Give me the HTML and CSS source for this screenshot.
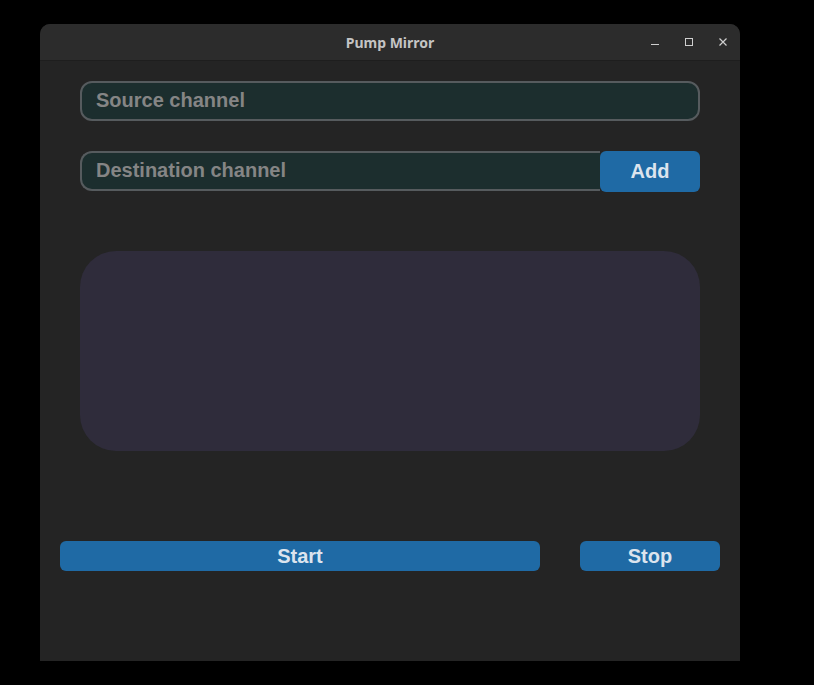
FILE: index.html
```html
<!DOCTYPE html>
<html>
<head>
<meta charset="utf-8">
<link rel="stylesheet" href="styles.css">
</head>
<body>
<div class="window">
  <div class="titlebar">
    <span class="title">Pump Mirror</span>
    <div class="controls">
      <svg class="ctl" width="10" height="10" viewBox="0 0 10 10"><path d="M1 7.5h8" stroke="#cfcfcf" stroke-width="1"/></svg>
      <svg class="ctl" width="10" height="10" viewBox="0 0 10 10"><rect x="1.5" y="1.5" width="7" height="7" fill="none" stroke="#cfcfcf" stroke-width="1"/></svg>
      <svg class="ctl" width="10" height="10" viewBox="0 0 10 10"><path d="M1.5 1.5l7 7M8.5 1.5l-7 7" stroke="#cfcfcf" stroke-width="1.2"/></svg>
    </div>
  </div>
  <div class="content">
    <div class="entry full"><span class="ph">Source channel</span></div>
    <div class="row">
      <div class="entry left"><span class="ph">Destination channel</span></div>
      <div class="btn add">Add</div>
    </div>
    <div class="textbox"></div>
    <div class="actions">
      <div class="btn start">Start</div>
      <div class="btn stop">Stop</div>
    </div>
  </div>
</div>
</body>
</html>
```
FILE: styles.css
```css
html, body {
  margin: 0;
  padding: 0;
  background: #000;
}
.window {
  margin-left: 40px;
  margin-top: 24px;
  width: 700px;
  height: 637px;
  background: #242424;
  border-radius: 10px 10px 0 0;
  overflow: hidden;
}
.titlebar {
  height: 36px;
  background: #2c2c2c;
  border-bottom: 1px solid #1e1e1e;
  display: flex;
  align-items: center;
  justify-content: center;
  position: relative;
}
.title {
  font-family: "Noto Sans", "DejaVu Sans", sans-serif;
  font-weight: 700;
  font-size: 14px;
  color: #c4c4c4;
}
.controls {
  position: absolute;
  right: 12px;
  top: 13px;
  display: flex;
  gap: 24px;
}
.ctl { display: block; }
.content {
  padding: 20px 40px 0 40px;
  display: flex;
  flex-direction: column;
}
.entry {
  box-sizing: border-box;
  height: 40px;
  background: #1c2e2e;
  border: 2px solid #565b5e;
  border-radius: 12px;
  display: flex;
  align-items: center;
  padding-left: 14px;
  padding-bottom: 2px;
}
.entry.left {
  flex: 1;
  border-radius: 12px 0 0 12px;
  border-right: none;
}
.ph {
  font-family: "Liberation Sans", Arial, sans-serif;
  font-weight: 700;
  font-size: 20px;
  color: #858585;
}
.row {
  display: flex;
  margin-top: 30px;
}
.btn {
  background: #1f6aa5;
  color: #dce4ee;
  font-family: "Liberation Sans", Arial, sans-serif;
  font-weight: 700;
  font-size: 20px;
  display: flex;
  align-items: center;
  justify-content: center;
  border-radius: 6px;
}
.add {
  width: 100px;
  height: 40px;
  padding-bottom: 1px;
}
.textbox {
  margin-top: 59px;
  height: 200px;
  background: #2f2c3b;
  border-radius: 36px;
}
.actions {
  margin: 90px -20px 0 -20px;
  display: flex;
  gap: 40px;
}
.start {
  width: 480px;
  height: 30px;
}
.stop {
  width: 140px;
  height: 30px;
}
```
